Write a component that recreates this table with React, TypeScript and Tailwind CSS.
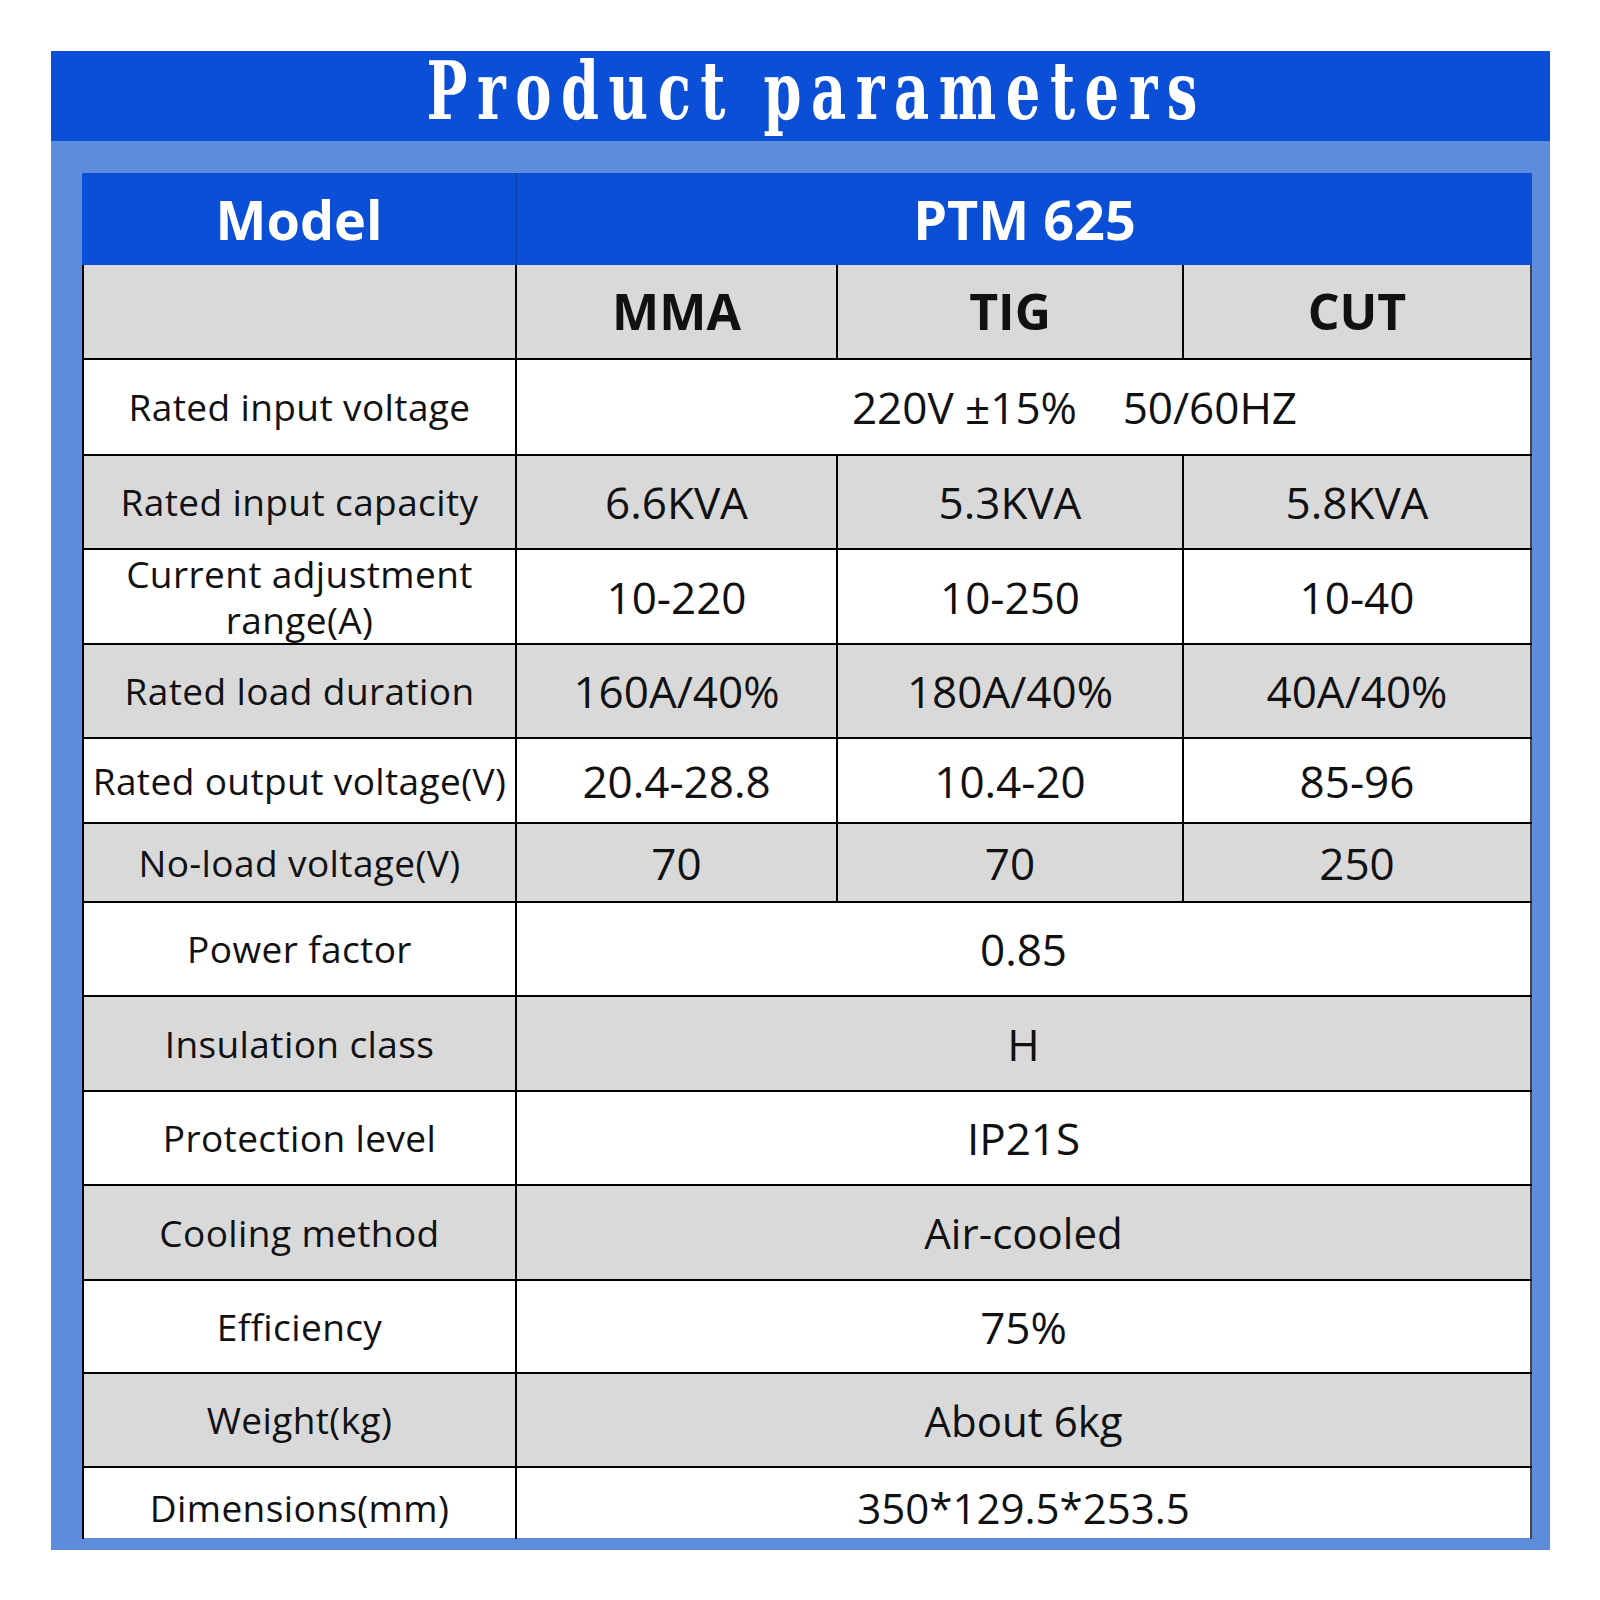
import React from "react";

type Row = {
  label: string[];
  values: string[];
  gray: boolean;
  h: number;
  last?: boolean;
  shift?: boolean;
  small?: boolean;
};

const rows: Row[] = [
  { label: ["Rated input voltage"], values: ["220V ±15%\u00a0\u00a0\u00a0 50/60HZ"], gray: false, h: 96, shift: true },
  { label: ["Rated input capacity"], values: ["6.6KVA", "5.3KVA", "5.8KVA"], gray: true, h: 94 },
  { label: ["Current adjustment", "range(A)"], values: ["10-220", "10-250", "10-40"], gray: false, h: 95 },
  { label: ["Rated load duration"], values: ["160A/40%", "180A/40%", "40A/40%"], gray: true, h: 94 },
  { label: ["Rated output voltage(V)"], values: ["20.4-28.8", "10.4-20", "85-96"], gray: false, h: 85 },
  { label: ["No-load voltage(V)"], values: ["70", "70", "250"], gray: true, h: 79 },
  { label: ["Power factor"], values: ["0.85"], gray: false, h: 94 },
  { label: ["Insulation class"], values: ["H"], gray: true, h: 95 },
  { label: ["Protection level"], values: ["IP21S"], gray: false, h: 94 },
  { label: ["Cooling method"], values: ["Air-cooled"], gray: true, h: 95, small: true },
  { label: ["Efficiency"], values: ["75%"], gray: false, h: 93 },
  { label: ["Weight(kg)"], values: ["About 6kg"], gray: true, h: 94, small: true },
  { label: ["Dimensions(mm)"], values: ["350*129.5*253.5"], gray: false, h: 70, last: true, small: true },
];

const font = { fontFamily: '"Open Sans", "Noto Sans", sans-serif' };

function DataRow({ r }: { r: Row }) {
  const bg = r.gray ? "bg-[#d9d9d9]" : "bg-white";
  const pad = r.last ? "pt-[8px]" : "";
  return (
    <div
      className={`grid grid-cols-[435px_321px_346px_348px] ${bg} ${r.last ? "" : "border-b-2 border-black"}`}
      style={{ height: r.h }}
    >
      <div
        className={`flex flex-col items-center justify-center border-l-2 border-r-2 border-black text-[37px] leading-[46px] text-[#111] tracking-[0.4px] ${pad}`}
      >
        {r.label.map((l) => (
          <span key={l}>{l}</span>
        ))}
      </div>
      {r.values.length === 1 ? (
        <div
          className={`col-span-3 flex items-center justify-center border-r-2 border-[#444] text-[#111] ${r.small ? "text-[42px]" : "text-[44px]"} ${r.shift ? "pl-[102px]" : ""} ${pad}`}
        >
          <span className="whitespace-pre">{r.values[0]}</span>
        </div>
      ) : (
        r.values.map((v, i) => (
          <div
            key={i}
            className={`flex items-center justify-center border-r-2 text-[44px] text-[#111] ${i === 2 ? "border-[#444]" : "border-black"}`}
          >
            {v}
          </div>
        ))
      )}
    </div>
  );
}

export default function App() {
  return (
    <div className="w-[1600px] h-[1600px] bg-white pt-[51px] pl-[51px]" style={font}>
      <div className="w-[1499px] h-[1499px] bg-[#5d8cdc] flex flex-col">
        <div className="h-[90px] bg-[#0b4fd7] flex items-center justify-center pl-[32px]">
          <span
            className="inline-block text-white text-[80px] font-bold tracking-[14px] leading-none -mt-[10px] scale-x-[0.68] whitespace-nowrap"
            style={{ fontFamily: '"DejaVu Serif", serif' }}
          >
            Product parameters
          </span>
        </div>
        <div className="pt-[32px] pl-[31px] pr-[18px]">
          <div className="w-[1450px]">
            <div className="grid grid-cols-[435px_1015px] h-[92px] bg-[#0b4fd7] text-white font-bold text-[54px]">
              <div className="flex items-center justify-center border-r border-[#0a3ea8]">Model</div>
              <div className="flex items-center justify-center">PTM 625</div>
            </div>
            <div className="grid grid-cols-[435px_321px_346px_348px] h-[95px] bg-[#d9d9d9] border-b-2 border-black text-[50px] font-bold text-[#111]">
              <div className="border-l-2 border-r-2 border-black" />
              <div className="flex items-center justify-center border-r-2 border-black">MMA</div>
              <div className="flex items-center justify-center border-r-2 border-black">TIG</div>
              <div className="flex items-center justify-center border-r-2 border-[#444]">CUT</div>
            </div>
            {rows.map((r, i) => (
              <DataRow key={i} r={r} />
            ))}
          </div>
        </div>
      </div>
    </div>
  );
}
